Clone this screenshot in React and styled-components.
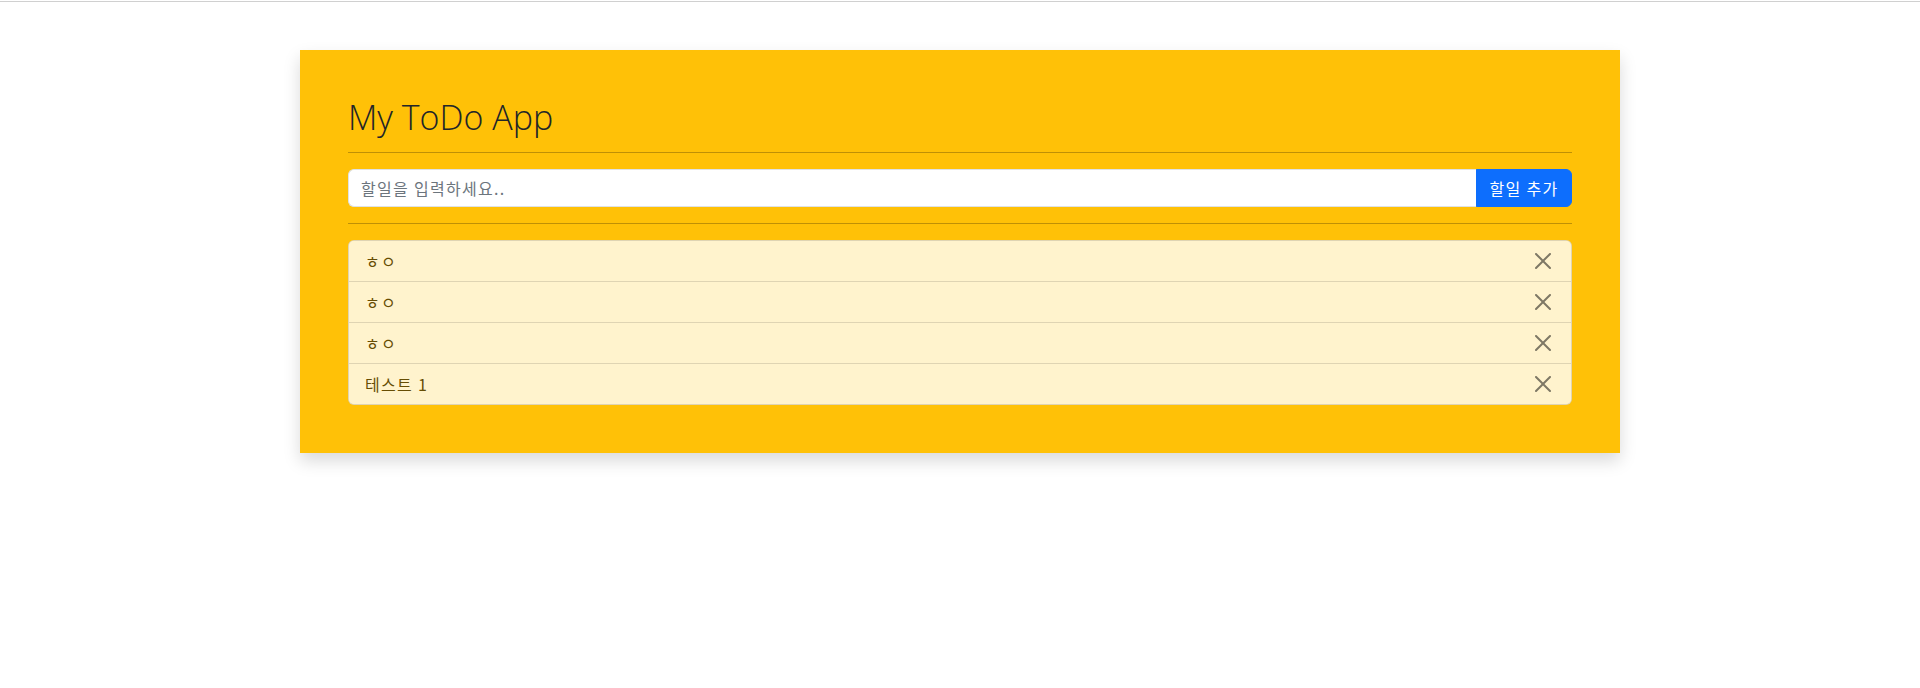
import styled, { createGlobalStyle } from 'styled-components'

const GlobalStyle = createGlobalStyle`
	* {
		box-sizing: border-box;
	}

	body {
		margin: 0;
		background: #fff;
		font-family: "Segoe UI", "Noto Sans", "Noto Sans CJK KR", sans-serif;
		font-size: 16px;
		line-height: 1.5;
		color: #212529;
	}
`

const TopRule = styled.div`
	margin-top: 1px;
	height: 1px;
	background-color: #d0d0d0;
`

const Page = styled.div`
	display: flex;
	justify-content: center;
	padding-top: 48px;
	height: 686px;
`

const Card = styled.div`
	width: 1320px;
	align-self: flex-start;
	background-color: #ffc107;
	padding: 48px;
	box-shadow: 0 8px 16px rgba(0, 0, 0, 0.15);
`

const Title = styled.h1`
	margin: 0;
	font-family: "Open Sans", "Noto Sans", sans-serif;
	font-weight: 300;
	font-size: 34px;
	line-height: 38px;
	color: #212529;
`

const Hr = styled.hr`
	margin: 16px 0;
	border: none;
	height: 1px;
	background-color: rgba(0, 0, 0, 0.25);
`

const InputGroup = styled.form`
	display: flex;
	height: 38px;
`

const Input = styled.input`
	flex: 1;
	min-width: 0;
	padding: 6px 12px;
	font-family: "Noto Sans CJK KR", sans-serif;
	font-size: 16px;
	letter-spacing: 1.3px;
	color: #212529;
	background: #fff;
	border: 1px solid #dee2e6;
	border-right: none;
	border-radius: 6px 0 0 6px;
	outline: none;

	&::placeholder {
		color: #6c757d;
	}
`

const AddButton = styled.button`
	width: 96px;
	padding: 0;
	font-family: "Noto Sans CJK KR", sans-serif;
	font-size: 16px;
	letter-spacing: 1.3px;
	color: #fff;
	background-color: #0d6efd;
	border: 1px solid #0d6efd;
	border-radius: 0 6px 6px 0;
	white-space: nowrap;
	cursor: pointer;
`

const List = styled.ul`
	margin: 0;
	padding: 0;
	list-style: none;
	background-color: #fff3cd;
	border: 1px solid rgba(0, 0, 0, 0.125);
	border-radius: 6px;
	overflow: hidden;
`

const Item = styled.li`
	display: flex;
	align-items: center;
	justify-content: space-between;
	height: ${(props) => (props.first ? '40px' : '41px')};
	padding: 0 16px;
	background-color: #fff3cd;
	color: #664d03;
	font-family: "Noto Sans CJK KR", sans-serif;
	font-size: 16px;
	letter-spacing: 1.3px;
	border-top: ${(props) => (props.first ? 'none' : '1px solid rgba(0, 0, 0, 0.125)')};
`

const CloseButton = styled.button`
	width: 24px;
	height: 24px;
	padding: 4px;
	display: flex;
	align-items: center;
	justify-content: center;
	background: transparent;
	border: none;
	opacity: 0.5;
	cursor: pointer;
`

const CloseIcon = () => (
	<svg width="16" height="16" viewBox="0 0 16 16" fill="#000">
		<path d="M.293.293a1 1 0 0 1 1.414 0L8 6.586 14.293.293a1 1 0 1 1 1.414 1.414L9.414 8l6.293 6.293a1 1 0 0 1-1.414 1.414L8 9.414l-6.293 6.293a1 1 0 0 1-1.414-1.414L6.586 8 .293 1.707a1 1 0 0 1 0-1.414z" />
	</svg>
)

const todos = ['ㅎㅇ', 'ㅎㅇ', 'ㅎㅇ', '테스트 1']

const App = () => {
	return (
		<>
			<GlobalStyle />
			<TopRule />
			<Page>
				<Card>
					<Title>My ToDo App</Title>
					<Hr />
					<InputGroup onSubmit={(e) => e.preventDefault()}>
						<Input placeholder="할일을 입력하세요.." />
						<AddButton type="submit">할일 추가</AddButton>
					</InputGroup>
					<Hr />
					<List>
						{todos.map((todo, i) => (
							<Item key={i} first={i === 0}>
								<span>{todo}</span>
								<CloseButton aria-label="삭제">
									<CloseIcon />
								</CloseButton>
							</Item>
						))}
					</List>
				</Card>
			</Page>
		</>
	)
}

export default App
